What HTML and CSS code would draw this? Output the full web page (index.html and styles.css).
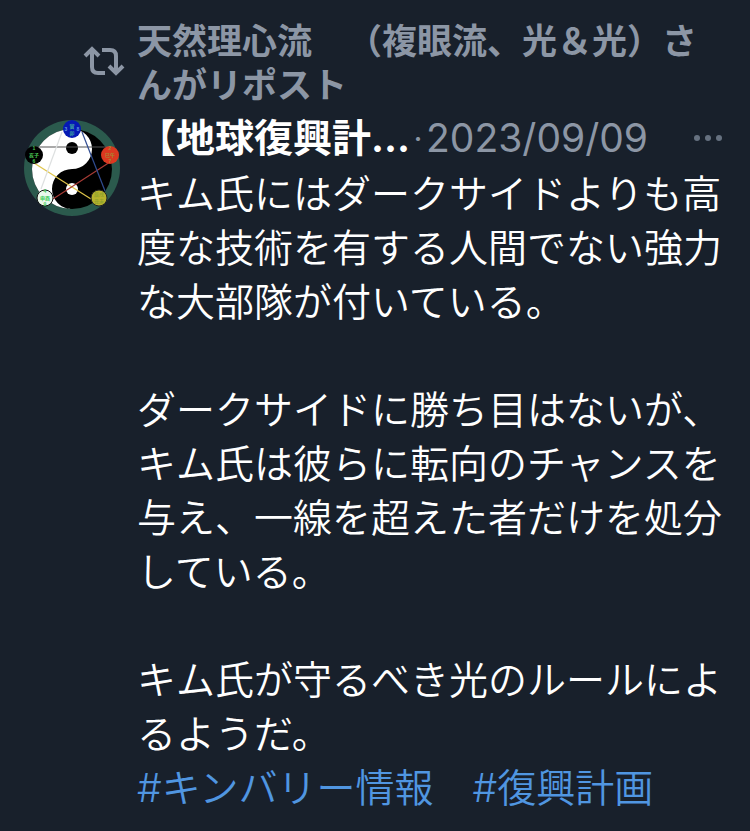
FILE: index.html
```html
<!DOCTYPE html>
<html lang="ja">
<head>
  <meta charset="UTF-8">
  <meta name="viewport" content="width=device-width, initial-scale=1.0">
  <title>ポスト</title>
  <link rel="stylesheet" href="styles.css">
</head>
<body>
  <article class="post">

    <!-- リポスト表示 -->
    <div class="repost">
      <svg class="repost-icon" viewBox="0 0 42 32" aria-hidden="true">
        <path d="M9 5V22Q9 28 15 28H22M19 5H27Q33 5 33 11V27"/>
        <path d="M2 11L9 4L16 11M26 21L33 28L40 21"/>
      </svg>
      <p class="repost-text">天然理心流　（複眼流、光＆光）さんがリポスト</p>
    </div>

    <div class="main">
      <!-- アイコン画像 -->
      <svg class="avatar" viewBox="0 0 96 96" role="img" aria-label="陰陽五行">
        <circle cx="48" cy="48" r="48" fill="#2b5a4d"/>
        <circle cx="48" cy="49" r="40" fill="#000"/>
        <path d="M48 9A40 40 0 0 0 48 89A20 20 0 0 1 48 49A20 20 0 0 0 48 9Z" fill="#fff"/>
        <circle cx="48" cy="28" r="6" fill="#000"/>
        <circle cx="48" cy="69" r="6" fill="#fff"/>
        <g fill="none" stroke-width="1.2">
          <path d="M10 27H86" stroke="#555"/>
          <path d="M10 43L67 79" stroke="#dfc54a"/>
          <path d="M86 42L29 79" stroke="#a83b35"/>
          <path d="M58 12L81 71" stroke="#304c91"/>
          <path d="M38 12L17 69" stroke="#dde0e0"/>
        </g>
        <circle cx="48" cy="9" r="9" fill="#0519b5"/>
        <circle cx="10" cy="35" r="9" fill="#000"/>
        <circle cx="86" cy="35" r="9" fill="#dc3820"/>
        <circle cx="21" cy="78" r="8" fill="#eaf8ec" stroke="#111"/>
        <circle cx="75" cy="78" r="8" fill="#b7b32d" stroke="#222"/>
        <g class="avatar-label">
          <text x="48" y="8" fill="#41a5a0">寅</text>
          <text x="48" y="15" fill="#41a5a0">卯</text>
          <text x="42" y="11" fill="#6495de">3</text>
          <text x="54" y="11" fill="#6495de">8</text>
          <text x="10" y="30" fill="#4ac754">1</text>
          <text x="10" y="37" fill="#4ac754">亥子</text>
          <text x="10" y="43" fill="#4ac754">6</text>
          <text x="86" y="30" fill="#a58b35">2</text>
          <text x="86" y="37" fill="#a58b35">巳午</text>
          <text x="86" y="43" fill="#a58b35">7</text>
          <text x="21" y="73" fill="#41cc5a">4</text>
          <text x="21" y="80" fill="#41cc5a">申酉</text>
          <text x="21" y="86" fill="#41cc5a">9</text>
          <text x="75" y="76" fill="#91a22c">辰戌</text>
          <text x="75" y="83" fill="#91a22c">丑未</text>
        </g>
      </svg>

      <div class="content">
        <header class="post-header">
          <span class="name">【地球復興計...</span>
          <span class="dot">·</span>
          <time class="date" datetime="2023-09-09">2023/09/09</time>
          <button class="more" type="button" aria-label="もっと見る">
            <svg class="more-icon" viewBox="0 0 30 8" aria-hidden="true">
              <circle cx="4" cy="4" r="3"/>
              <circle cx="15" cy="4" r="3"/>
              <circle cx="26" cy="4" r="3"/>
            </svg>
          </button>
        </header>

        <div class="body">
          <p>キム氏にはダークサイドよりも高度な技術を有する人間でない強力な大部隊が付いている。</p>
          <p>ダークサイドに勝ち目はないが、キム氏は彼らに転向のチャンスを与え、一線を超えた者だけを処分している。</p>
          <p>キム氏が守るべき光のルールによるようだ。<br><a href="#">#キンバリー情報</a>　<a href="#">#復興計画</a></p>
        </div>
      </div>
    </div>

  </article>
</body>
</html>
```
FILE: styles.css
```css
/* ==== Reset & Base ==== */
* { margin:0; padding:0; box-sizing:border-box; }

body {
  background:#18202b;
  color:#fff;
  font-family:Inter, "Noto Sans CJK JP", sans-serif;
  font-size:39px;
  font-weight:350;
  line-height:54px;
  text-spacing-trim:space-all;
}

.post { padding:17px 24px 14px; }

/* ==== リポスト ==== */
.repost {
  display:flex; align-items:center; gap:12px;
  color:#8c96a5;
  font-family:"Noto Sans CJK JP", sans-serif;
  font-size:35px; font-weight:700; line-height:44px;
}
.repost-icon {
  flex:none; width:42px; height:32px; margin-left:59px;
  fill:none; stroke:#8c96a5; stroke-width:4;
}
.repost-text { flex:1; }

/* ==== 本体 ==== */
.main { display:flex; align-items:flex-start; gap:17px; }
.avatar { flex:none; width:96px; height:96px; margin-top:15px; }
.avatar-label {
  font-family:"Liberation Sans", "Noto Sans CJK JP", sans-serif;
  font-size:5px; font-weight:700; text-anchor:middle;
}
.content { flex:1; min-width:0; padding-top:6px; }

.post-header { display:flex; align-items:center; white-space:nowrap; }
.name { font-weight:700; }
.dot, .date { color:#8c96a5; }
.date { font-weight:400; }
.dot { width:16px; text-align:center; }
.more {
  display:flex; margin:0 3px 0 auto;
  background:none; border:none; cursor:pointer;
}
.more-icon { width:30px; height:8px; fill:#667180; }

/* ==== 本文 ==== */
.body { padding-top:2px; }
.body p + p { margin-top:54px; }
.body a { color:#5096e1; text-decoration:none; }
```
